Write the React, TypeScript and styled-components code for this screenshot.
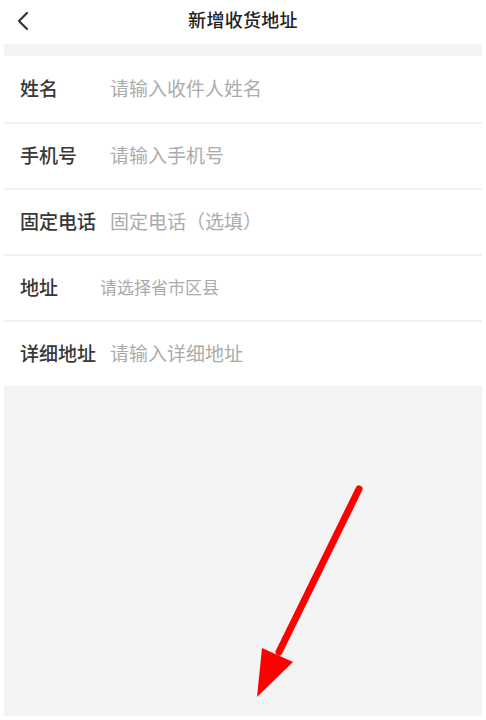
import React from 'react'
import styled, { createGlobalStyle } from 'styled-components'

const GlobalStyle = createGlobalStyle`
  html, body {
    margin: 0;
    padding: 0;
    background: #ffffff;
  }
  body {
    font-family: "Noto Sans CJK SC", "Noto Sans", sans-serif;
  }
`

const Page = styled.div`
  position: relative;
  width: 486px;
  height: 720px;
  padding: 0 4px 4px 4px;
  box-sizing: border-box;
  display: flex;
  flex-direction: column;
  background: #fff;
  overflow: hidden;
`

const Header = styled.div`
  height: 44px;
  display: flex;
  align-items: center;
  justify-content: center;
  position: relative;
  flex-shrink: 0;
`

const BackButton = styled.div`
  position: absolute;
  left: 12px;
  top: 10px;
  width: 16px;
  height: 22px;
  display: flex;
  align-items: center;
`

const Title = styled.div`
  font-size: 18px;
  color: #222;
  font-weight: 500;
  margin-top: -6px;
  letter-spacing: 0.3px;
`

const Gap = styled.div`
  height: 12px;
  background: #f4f4f4;
  flex-shrink: 0;
`

const Form = styled.div`
  display: flex;
  flex-direction: column;
  background: #fff;
`

const Row = styled.div`
  height: 66px;
  box-sizing: border-box;
  display: flex;
  align-items: center;
  padding-left: 16px;
  padding-bottom: 3px;
  border-top: 2px solid #f1f1f1;

  &:first-child {
    border-top: none;
  }
`

const Label = styled.div`
  width: 90px;
  flex-shrink: 0;
  font-size: 19px;
  font-weight: 500;
  color: #383838;
  white-space: nowrap;
`

const Placeholder = styled.div<{ $small?: boolean; $offset?: number }>`
  font-size: ${(p) => (p.$small ? '17px' : '19px')};
  color: #ababab;
  margin-left: ${(p) => p.$offset ?? 0}px;
  white-space: nowrap;
`

const Filler = styled.div`
  flex: 1;
  background: #f4f4f4;
`

const Arrow = styled.svg`
  position: absolute;
  left: 0;
  top: 0;
  pointer-events: none;
`

const fields = [
  { label: '姓名', placeholder: '请输入收件人姓名' },
  { label: '手机号', placeholder: '请输入手机号' },
  { label: '固定电话', placeholder: '固定电话（选填）' },
  { label: '地址', placeholder: '请选择省市区县', small: true, offset: -10 },
  { label: '详细地址', placeholder: '请输入详细地址' },
]

export default function App() {
  return (
    <>
      <GlobalStyle />
      <Page>
        <Header>
          <BackButton>
            <svg width="14" height="20" viewBox="0 0 14 20">
              <path d="M11 2 L3 10 L11 18" fill="none" stroke="#333" strokeWidth="2.2" strokeLinecap="round" strokeLinejoin="round" />
            </svg>
          </BackButton>
          <Title>新增收货地址</Title>
        </Header>
        <Gap />
        <Form>
          {fields.map((f) => (
            <Row key={f.label}>
              <Label>{f.label}</Label>
              <Placeholder $small={f.small} $offset={f.offset}>
                {f.placeholder}
              </Placeholder>
            </Row>
          ))}
        </Form>
        <Filler />
        <Arrow width="486" height="720" viewBox="0 0 486 720">
          <line x1="359" y1="489" x2="279" y2="652" stroke="#ff0000" strokeWidth="7" strokeLinecap="round" />
          <polygon points="257,697 262,648 293,662" fill="#ff0000" />
        </Arrow>
      </Page>
    </>
  )
}
